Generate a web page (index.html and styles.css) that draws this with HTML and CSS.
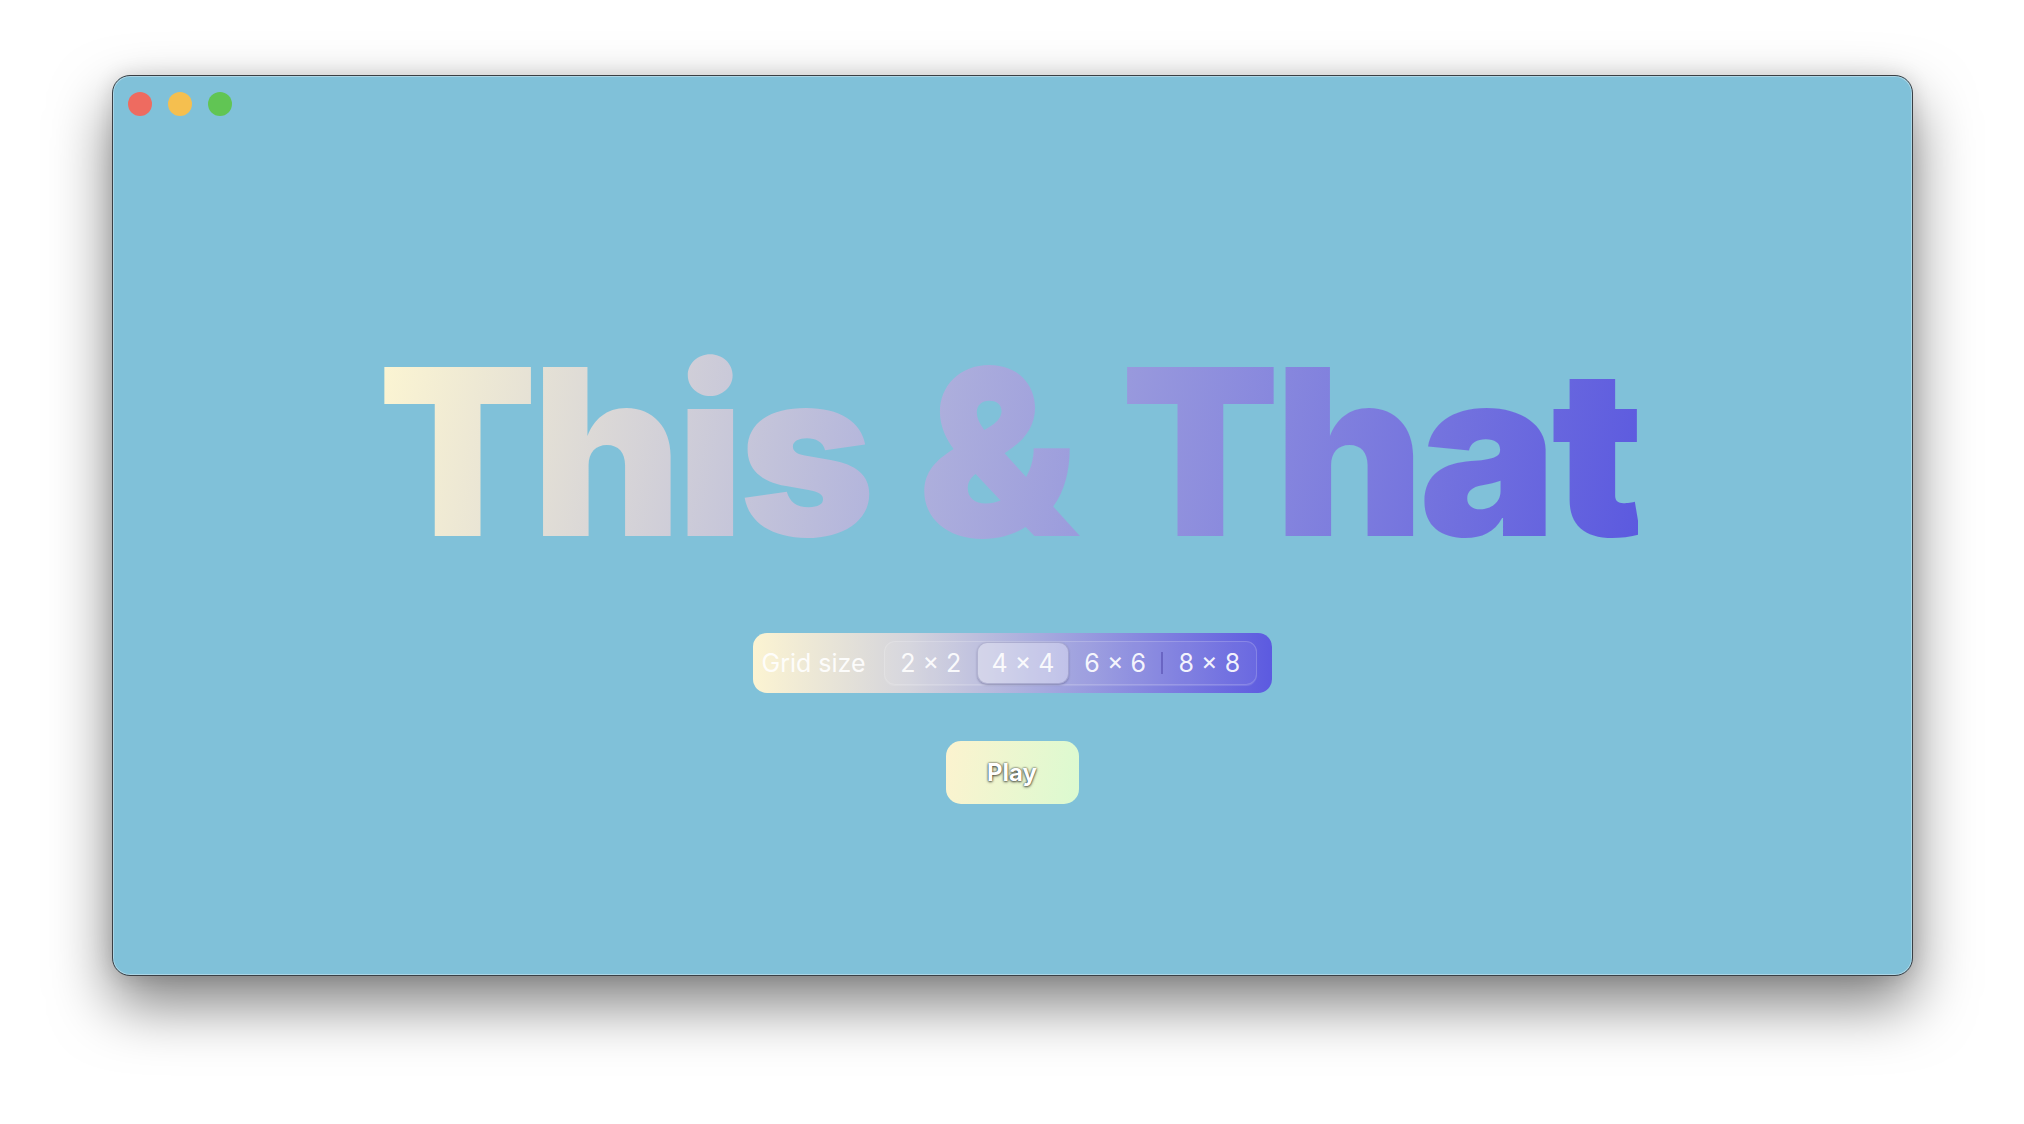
FILE: index.html
```html
<!DOCTYPE html>
<html lang="en">
<head>
<meta charset="utf-8">
<title>This &amp; That</title>
<link rel="stylesheet" href="styles.css">
</head>
<body>
<div class="window">
  <div class="titlebar">
    <span class="light red"></span>
    <span class="light yellow"></span>
    <span class="light green"></span>
  </div>
  <main class="content">
    <h1 class="title">This &amp; That</h1>
    <div class="picker">
      <span class="picker-label">Grid size</span>
      <div class="segments">
        <span class="seg">2 × 2</span>
        <span class="seg selected">4 × 4</span>
        <span class="seg">6 × 6</span>
        <span class="sep"></span>
        <span class="seg">8 × 8</span>
      </div>
    </div>
    <button class="play">Play</button>
  </main>
</div>
</body>
</html>
```

FILE: styles.css
```css
html, body {
  margin: 0;
  padding: 0;
  background: #ffffff;
  width: 2024px;
  height: 1124px;
  overflow: hidden;
}

body {
  font-family: Inter, "Noto Sans", "Liberation Sans", sans-serif;
  padding-top: 75px;
  box-sizing: border-box;
}

.window {
  width: 1799px;
  height: 899px;
  margin: 0 auto;
  background: #80c1d9;
  border: 1px solid #3a3f44;
  border-radius: 18px;
  box-shadow: inset 0 0 0 1px rgba(255,255,255,0.35), 0 28px 60px rgba(0,0,0,0.5), 0 0 20px rgba(0,0,0,0.12);
  display: flex;
  flex-direction: column;
}

.titlebar {
  display: flex;
  gap: 16px;
  padding: 16px 0 0 15px;
  height: 40px;
  box-sizing: border-box;
}

.light {
  width: 24px;
  height: 24px;
  border-radius: 50%;
}
.red { background: #ee6b60; }
.yellow { background: #f5bf4f; }
.green { background: #61c554; }

.content {
  display: flex;
  flex-direction: column;
  align-items: center;
  padding-top: 220px;
}

.title {
  margin: 0 8px 0 0;
  font-size: 232px;
  font-weight: 900;
  line-height: 1;
  letter-spacing: -6px;
  word-spacing: 8px;
  background: linear-gradient(100deg, #fdf6d2 0%, #b3b5dc 40%, #5b59df 100%);
  -webkit-background-clip: text;
  background-clip: text;
  color: transparent;
}

.picker {
  margin-top: 65px;
  display: flex;
  align-items: center;
  gap: 18px;
  width: 519px;
  height: 60px;
  box-sizing: border-box;
  padding: 0 15px 0 9px;
  border-radius: 14px;
  background: linear-gradient(90deg, #fcf4d2 0%, #d4d4dc 30%, #a8abde 55%, #5c5ae0 100%);
}

.picker-label {
  font-size: 25px;
  color: rgba(255,255,255,0.92);
}

.segments {
  flex: 1;
  height: 44px;
  box-sizing: border-box;
  display: flex;
  align-items: center;
  border-radius: 11px;
  background: rgba(255,255,255,0.06);
  box-shadow: inset 0 0 0 1px rgba(255,255,255,0.18), 0 1px 1px rgba(255,255,255,0.15);
  padding: 1px;
}

.seg {
  flex: 1;
  height: 42px;
  display: flex;
  align-items: center;
  justify-content: center;
  font-size: 25px;
  color: rgba(255,255,255,0.92);
  border-radius: 10px;
}

.seg.selected {
  background: rgba(255,255,255,0.32);
  box-shadow: 0 1px 2px rgba(40,40,90,0.35), inset 0 0 0 1px rgba(80,80,140,0.25);
}

.sep {
  width: 2px;
  height: 22px;
  background: rgba(70,60,160,0.45);
}

.play {
  margin-top: 48px;
  width: 133px;
  height: 63px;
  border: none;
  border-radius: 15px;
  background: linear-gradient(100deg, #fcf3cf 0%, #dbfad0 100%);
  font-family: Inter, "Noto Sans", sans-serif;
  font-size: 24px;
  font-weight: 700;
  color: #ffffff;
  text-shadow: 0 0 2px rgba(0,0,0,0.8), 0 1px 3px rgba(0,0,0,0.6);
  padding: 0;
}
```
